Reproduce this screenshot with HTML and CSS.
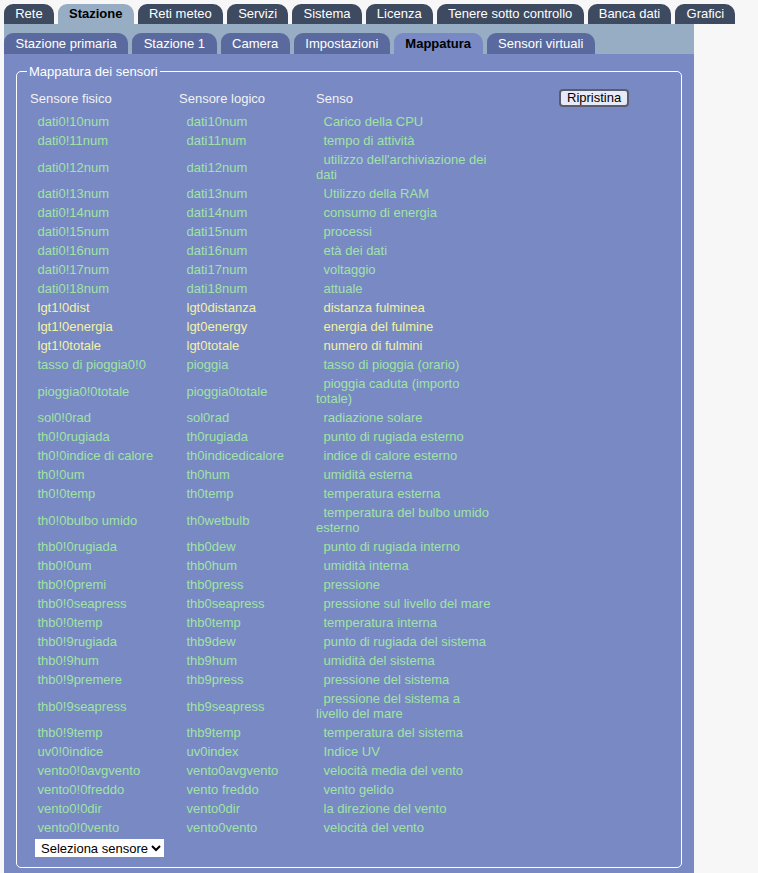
FILE: index.html
```html
<!DOCTYPE html>
<html lang="it">
<head>
  <meta charset="UTF-8">
  <meta name="viewport" content="width=device-width, initial-scale=1.0">
  <title>Mappatura dei sensori</title>
  <link rel="stylesheet" href="styles.css">
</head>
<body>
  <div class="page">
    <ul class="tabs">
      <li class="tab">Rete</li>
      <li class="tab active">Stazione</li>
      <li class="tab">Reti meteo</li>
      <li class="tab">Servizi</li>
      <li class="tab">Sistema</li>
      <li class="tab">Licenza</li>
      <li class="tab">Tenere sotto controllo</li>
      <li class="tab">Banca dati</li>
      <li class="tab">Grafici</li>
    </ul>

    <div class="subbar">
      <ul class="subtabs">
        <li class="subtab">Stazione primaria</li>
        <li class="subtab">Stazione 1</li>
        <li class="subtab">Camera</li>
        <li class="subtab">Impostazioni</li>
        <li class="subtab active">Mappatura</li>
        <li class="subtab">Sensori virtuali</li>
      </ul>
    </div>

    <div class="panel">
      <fieldset class="mapping">
        <legend>Mappatura dei sensori</legend>
        <table class="sensor-table">
          <colgroup>
            <col class="col-phys">
            <col class="col-logic">
            <col class="col-sense">
            <col>
          </colgroup>
          <thead>
            <tr>
              <th>Sensore fisico</th>
              <th>Sensore logico</th>
              <th>Senso</th>
              <th class="reset-cell"><button class="reset-btn">Ripristina</button></th>
            </tr>
          </thead>
          <tbody>
            <tr><td>dati0!10num</td><td>dati10num</td><td>Carico della CPU</td><td></td></tr>
            <tr><td>dati0!11num</td><td>dati11num</td><td>tempo di attività</td><td></td></tr>
            <tr><td>dati0!12num</td><td>dati12num</td><td>utilizzo dell'archiviazione dei dati</td><td></td></tr>
            <tr><td>dati0!13num</td><td>dati13num</td><td>Utilizzo della RAM</td><td></td></tr>
            <tr><td>dati0!14num</td><td>dati14num</td><td>consumo di energia</td><td></td></tr>
            <tr><td>dati0!15num</td><td>dati15num</td><td>processi</td><td></td></tr>
            <tr><td>dati0!16num</td><td>dati16num</td><td>età dei dati</td><td></td></tr>
            <tr><td>dati0!17num</td><td>dati17num</td><td>voltaggio</td><td></td></tr>
            <tr><td>dati0!18num</td><td>dati18num</td><td>attuale</td><td></td></tr>
            <tr class="lightning"><td>lgt1!0dist</td><td>lgt0distanza</td><td>distanza fulminea</td><td></td></tr>
            <tr class="lightning"><td>lgt1!0energia</td><td>lgt0energy</td><td>energia del fulmine</td><td></td></tr>
            <tr class="lightning"><td>lgt1!0totale</td><td>lgt0totale</td><td>numero di fulmini</td><td></td></tr>
            <tr><td>tasso di pioggia0!0</td><td>pioggia</td><td>tasso di pioggia (orario)</td><td></td></tr>
            <tr><td>pioggia0!0totale</td><td>pioggia0totale</td><td>pioggia caduta (importo totale)</td><td></td></tr>
            <tr><td>sol0!0rad</td><td>sol0rad</td><td>radiazione solare</td><td></td></tr>
            <tr><td>th0!0rugiada</td><td>th0rugiada</td><td>punto di rugiada esterno</td><td></td></tr>
            <tr><td>th0!0indice di calore</td><td>th0indicedicalore</td><td>indice di calore esterno</td><td></td></tr>
            <tr><td>th0!0um</td><td>th0hum</td><td>umidità esterna</td><td></td></tr>
            <tr><td>th0!0temp</td><td>th0temp</td><td>temperatura esterna</td><td></td></tr>
            <tr><td>th0!0bulbo umido</td><td>th0wetbulb</td><td>temperatura del bulbo umido esterno</td><td></td></tr>
            <tr><td>thb0!0rugiada</td><td>thb0dew</td><td>punto di rugiada interno</td><td></td></tr>
            <tr><td>thb0!0um</td><td>thb0hum</td><td>umidità interna</td><td></td></tr>
            <tr><td>thb0!0premi</td><td>thb0press</td><td>pressione</td><td></td></tr>
            <tr><td>thb0!0seapress</td><td>thb0seapress</td><td>pressione sul livello del mare</td><td></td></tr>
            <tr><td>thb0!0temp</td><td>thb0temp</td><td>temperatura interna</td><td></td></tr>
            <tr><td>thb0!9rugiada</td><td>thb9dew</td><td>punto di rugiada del sistema</td><td></td></tr>
            <tr><td>thb0!9hum</td><td>thb9hum</td><td>umidità del sistema</td><td></td></tr>
            <tr><td>thb0!9premere</td><td>thb9press</td><td>pressione del sistema</td><td></td></tr>
            <tr><td>thb0!9seapress</td><td>thb9seapress</td><td>pressione del sistema a livello del mare</td><td></td></tr>
            <tr><td>thb0!9temp</td><td>thb9temp</td><td>temperatura del sistema</td><td></td></tr>
            <tr><td>uv0!0indice</td><td>uv0index</td><td>Indice UV</td><td></td></tr>
            <tr><td>vento0!0avgvento</td><td>vento0avgvento</td><td>velocità media del vento</td><td></td></tr>
            <tr><td>vento0!0freddo</td><td>vento freddo</td><td>vento gelido</td><td></td></tr>
            <tr><td>vento0!0dir</td><td>vento0dir</td><td>la direzione del vento</td><td></td></tr>
            <tr><td>vento0!0vento</td><td>vento0vento</td><td>velocità del vento</td><td></td></tr>
          </tbody>
        </table>
        <div class="add-row">
          <select class="sensor-select">
            <option>Seleziona sensore</option>
          </select>
        </div>
      </fieldset>
    </div>
  </div>
</body>
</html>
```

FILE: styles.css
```css
:root {
  --page-bg: #f7f7f7;
  --tab-dark: #3d4a60;
  --bar-bg: #97adc4;
  --subtab-bg: #5b6a9e;
  --panel-bg: #7889c3;
  --text-green: #a0e4a4;
  --text-yellow: #f2f2a6;
}

body {
  margin: 4px;
  background: var(--page-bg);
  font-family: "Liberation Sans", Arial, sans-serif;
  font-size: 13px;
}

.page {
  width: 690px;
}

/* top level navigation, wider than the panel below it */
.tabs {
  display: flex;
  gap: 4px;
  margin: 0;
  padding: 0;
  list-style: none;
  white-space: nowrap;
}

.tab {
  flex-shrink: 0;
  height: 20px;
  line-height: 20px;
  padding: 0 11.2px;
  background: var(--tab-dark);
  color: #fff;
  border-radius: 9px 10px 0 0;
}

.tab.active {
  background: var(--bar-bg);
  color: #000;
  font-weight: bold;
}

/* second level navigation */
.subbar {
  background: var(--bar-bg);
  padding-top: 9px;
}

.subtabs {
  display: flex;
  gap: 4px;
  margin: 0;
  padding: 0;
  list-style: none;
  white-space: nowrap;
}

.subtab {
  height: 21px;
  line-height: 21px;
  padding: 0 11.5px;
  background: var(--subtab-bg);
  color: #fff;
  border-radius: 9px 10px 0 0;
}

.subtab.active {
  background: var(--panel-bg);
  color: #000;
  font-weight: bold;
}

.panel {
  background: var(--panel-bg);
  padding: 10px 10px 12px;
}

.mapping {
  margin: 0 2px;
  padding: 4px 10px 10px;
  border: 1px solid #fff;
  border-radius: 5px;
  min-width: 0;
}

.mapping legend {
  padding: 0 2px;
  color: #fff;
}

.sensor-table {
  border-spacing: 2px;
  table-layout: fixed;
  width: 602px;
  margin-top: 1px;
}

.col-phys { width: 147px; }
.col-logic { width: 135px; }
.col-sense { width: 182px; }

.sensor-table th {
  padding: 3px 1px 4px;
  font-weight: normal;
  text-align: left;
  color: #f2f2f2;
}

.sensor-table td {
  padding: 1px;
  text-indent: 7.5px;
  color: var(--text-green);
  line-height: 15px;
}

.sensor-table .lightning td {
  color: var(--text-yellow);
}

.sensor-table .reset-cell {
  padding-left: 60px;
}

.reset-btn {
  font-family: inherit;
  font-size: 13px;
  line-height: 14px;
  padding: 0 6px;
  color: #000;
  background: #e6eaf9;
  border: 2px solid #585c6b;
  border-radius: 4px;
}

.add-row {
  padding: 1px 0 0 8px;
}

.sensor-select {
  font-family: inherit;
  font-size: 13px;
  height: 18px;
  padding: 0 0 0 2px;
  color: #000;
  background: #fff;
  border: none;
  border-radius: 0;
}
```
